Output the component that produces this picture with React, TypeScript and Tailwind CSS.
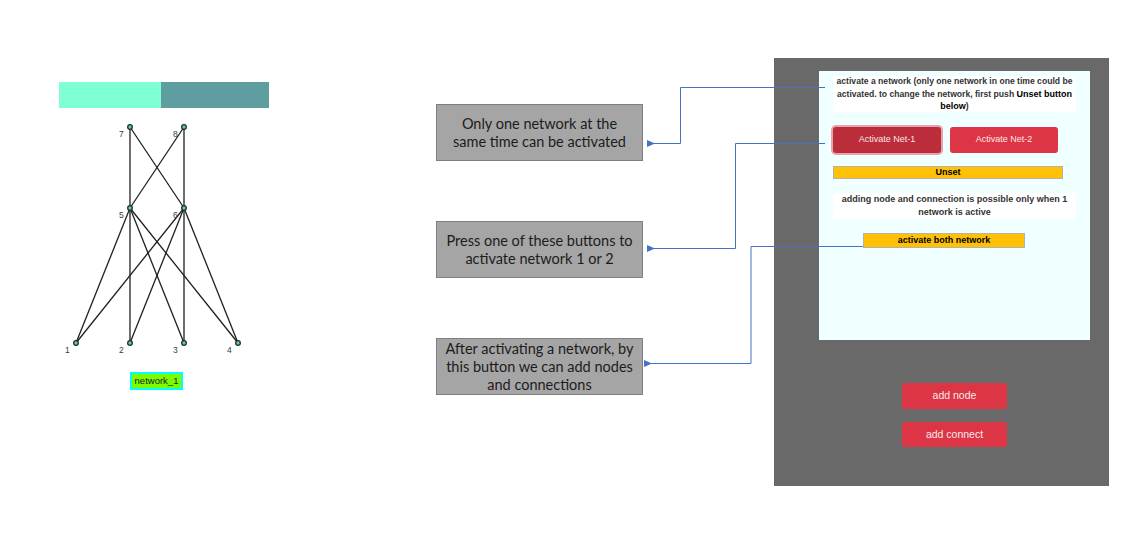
const nodes: { id: string; x: number; y: number }[] = [
  { id: "1", x: 17, y: 235 },
  { id: "2", x: 71, y: 235 },
  { id: "3", x: 125, y: 235 },
  { id: "4", x: 179, y: 235 },
  { id: "5", x: 71, y: 100 },
  { id: "6", x: 125, y: 100 },
  { id: "7", x: 71, y: 19 },
  { id: "8", x: 125, y: 19 },
];

const edges: [string, string][] = [
  ["7", "5"], ["7", "6"], ["8", "5"], ["8", "6"],
  ["5", "1"], ["5", "2"], ["5", "3"], ["5", "4"],
  ["6", "1"], ["6", "2"], ["6", "3"], ["6", "4"],
];

function Graph() {
  const pos = (id: string) => nodes.find((n) => n.id === id)!;
  return (
    <svg width="210" height="252" className="block">
      {edges.map(([a, b]) => {
        const p = pos(a);
        const q = pos(b);
        return <line key={a + b} x1={p.x} y1={p.y} x2={q.x} y2={q.y} stroke="#1f1f1f" strokeWidth="1.3" />;
      })}
      {nodes.map((n) => (
        <g key={n.id}>
          <circle cx={n.x} cy={n.y} r="2.3" fill="#6cc9b0" stroke="#1a2f2b" strokeWidth="1.3" />
          <text x={n.x - 11} y={n.y + 10} fontSize="8.5" fill="#3a3a3a" fontFamily="Liberation Sans, sans-serif">
            {n.id}
          </text>
        </g>
      ))}
    </svg>
  );
}

function Note({ children, mt }: { children: React.ReactNode; mt: string }) {
  return (
    <div className={`${mt} w-[207px] h-[57px] bg-[#a5a5a5] border border-[#7f7f7f] flex items-center justify-center text-center text-[14.5px] leading-[18px] text-[#1c1c1c] font-['Lato',sans-serif]`}>
      {children}
    </div>
  );
}

function Arrows() {
  const blue = "#4472c4";
  return (
    <svg className="absolute inset-0 pointer-events-none" width="1139" height="552">
      <defs>
        <marker id="tip" markerWidth="8" markerHeight="8" refX="1" refY="4" orient="auto" markerUnits="userSpaceOnUse">
          <path d="M8 0.5 L0 4 L8 7.5 Z" fill={blue} />
        </marker>
      </defs>
      <polyline points="825,87.5 680.5,87.5 680.5,143.5 654,143.5" fill="none" stroke={blue} strokeWidth="1" markerEnd="url(#tip)" />
      <polyline points="825,143.5 735.5,143.5 735.5,248.5 654,248.5" fill="none" stroke={blue} strokeWidth="1" markerEnd="url(#tip)" />
      <polyline points="863,246.5 751,246.5 751,363.5 651,363.5" fill="none" stroke={blue} strokeWidth="1" markerEnd="url(#tip)" />
    </svg>
  );
}

export default function App() {
  return (
    <div className="relative w-[1139px] h-[552px] bg-white flex overflow-hidden">
      {/* graph column */}
      <div className="ml-[59px] pt-[82px] w-[210px] flex flex-col">
        <div className="flex h-[26px]">
          <div className="w-[102px] bg-[#7fffd4]" />
          <div className="flex-1 bg-[#5f9ea0]" />
        </div>
        <Graph />
        <div className="mt-[12px] ml-[71px] w-[53px] h-[18px] border-2 border-[#00ffff] bg-[#7cfc00] flex items-center justify-center text-[9.5px] text-[#1a1a1a] font-['Liberation_Sans',sans-serif]">
          network_1
        </div>
      </div>

      {/* notes */}
      <div className="ml-[167px] pt-[104px] flex flex-col">
        <Note mt="mt-0">
          <span>Only one network at the<br />same time can be activated</span>
        </Note>
        <Note mt="mt-[60px]">
          <span>Press one of these buttons to<br />activate network 1 or 2</span>
        </Note>
        <Note mt="mt-[60px]">
          <span>After activating a network, by<br />this button we can add nodes<br />and connections</span>
        </Note>
      </div>

      {/* app panel */}
      <div className="ml-[131px] mt-[58px] w-[335px] h-[428px] bg-[#696969] flex flex-col font-['Liberation_Sans',sans-serif]">
        <div className="ml-[45px] mt-[13px] w-[271px] h-[269px] bg-[#f0ffff] flex flex-col">
          <div className="ml-[14px] mt-[5px] w-[243px] h-[36px] bg-white flex items-center justify-center text-center text-[8.6px] leading-[12.5px] font-bold text-[#333] whitespace-nowrap">
            <span>
              activate a network (only one network in one time could be
              <br />
              activated. to change the network, first push <b className="font-bold text-[9px] text-black">Unset button</b>
              <br />
              <b className="font-bold text-[9px] text-black">below</b>)
            </span>
          </div>
          <div className="ml-[14px] mt-[15px] flex gap-[9px]">
            <div className="w-[108px] h-[26px] rounded-[3px] bg-[#bb2d3b] ring-2 ring-[#e7a3ab] flex items-center justify-center text-[9px] text-[#f8e6e8]">
              Activate Net-1
            </div>
            <div className="w-[108px] h-[26px] rounded-[3px] bg-[#dc3545] flex items-center justify-center text-[9px] text-[#fbe9eb]">
              Activate Net-2
            </div>
          </div>
          <div className="ml-[14px] mt-[13px] w-[230px] h-[13px] bg-[#ffc107] border border-[#b9b2a0] flex items-center justify-center text-[9px] font-bold text-black">
            Unset
          </div>
          <div className="ml-[14px] mt-[14px] w-[243px] h-[26px] bg-white flex items-center justify-center text-center text-[9px] leading-[13px] font-bold text-[#333]">
            <span>adding node and connection is possible only when 1<br />network is active</span>
          </div>
          <div className="ml-[44px] mt-[14px] w-[162px] h-[15px] bg-[#ffc107] border border-[#b9b2a0] flex items-center justify-center text-[9px] font-bold text-black">
            activate both network
          </div>
        </div>
        <div className="ml-[128px] mt-[43px] w-[105px] h-[26px] rounded-[3px] bg-[#dc3545] flex items-center justify-center text-[10.5px] text-[#fbe9eb]">
          add node
        </div>
        <div className="ml-[128px] mt-[13px] w-[105px] h-[25px] rounded-[3px] bg-[#dc3545] flex items-center justify-center text-[10.5px] text-[#fbe9eb]">
          add connect
        </div>
      </div>

      <Arrows />
    </div>
  );
}
